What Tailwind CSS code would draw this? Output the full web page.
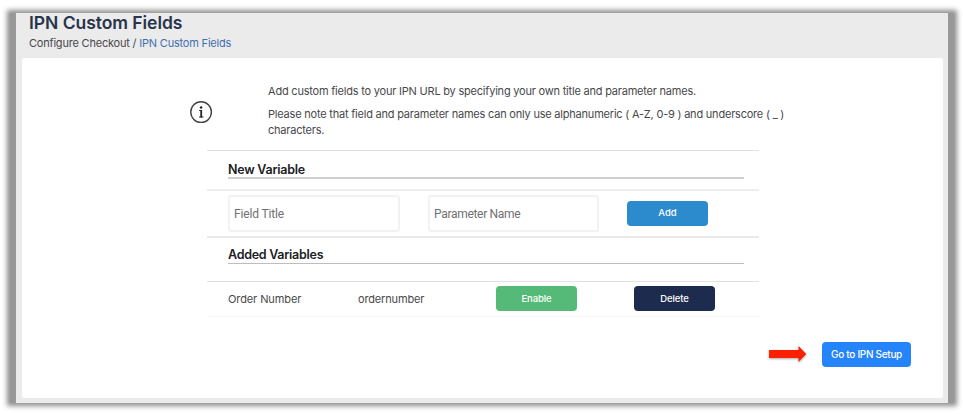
<!DOCTYPE html>
<html lang="en">
<head>
<meta charset="utf-8">
<title>IPN Custom Fields</title>
<script src="https://cdn.jsdelivr.net/npm/@tailwindcss/browser@4"></script>
</head>
<body class="h-[414px] overflow-hidden bg-white pt-[13px] pl-4 font-['Inter',sans-serif] text-[#48484b]">
<div class="relative h-[390px] w-[932px]">
  <div class="absolute -inset-x-[6px] inset-y-0 bg-[#989898] shadow-[0_0_5px_3px_#8f8f8f]"></div>
  <div class="relative flex h-full flex-col bg-[#ebebec] px-[6px] pb-[5px]">
    <header class="h-[45px] shrink-0 pl-[7px] whitespace-nowrap">
      <h1 class="h-[22px] text-[17.5px] leading-[20px] font-semibold tracking-[-0.05px] text-[#27344a]"><span>IPN Custom Fields</span></h1>
      <nav class="text-[11px] leading-[17px] tracking-[-0.2px]"><span>Configure Checkout / </span><a class="text-[#3d70ae]">IPN Custom Fields</a></nav>
    </header>
    <main class="relative mr-[-1px] h-[340px] rounded-[3px] bg-white pt-[25px]">
      <section class="flex h-[67px] pl-[168px]">
        <svg class="mt-[17px] h-6 w-6 shrink-0" viewBox="0 0 24 24" fill="none">
          <circle cx="11.1" cy="12.1" r="10.3" stroke="#444448" stroke-width="1.4"/>
          <circle cx="11.1" cy="7.6" r="1.25" fill="#222226"/>
          <path d="M9.2 10.5H12M9.1 17H13.5" stroke="#222226" stroke-width="1.1"/><path d="M11.2 10V17.5" stroke="#222226" stroke-width="1.8"/>
        </svg>
        <div class="ml-[54px] text-[11px] leading-4 tracking-[-0.21px] whitespace-nowrap">
          <p class="mb-[7px]"><span>Add custom fields to your IPN URL by specifying your own title and parameter names.</span></p>
          <p><span>Please note that field and parameter names can only use alphanumeric ( A-Z, 0-9 ) and underscore ( _ )</span><br><span>characters.</span></p>
        </div>
      </section>
      <section class="ml-[185px] w-[552px] text-[11px]">
        <div class="h-[39px] border-t border-[#e2e2e3] pr-[15px] pl-[21px]">
          <h2 class="h-[28px] border-b-2 border-[#d0d0d1] pt-[10px] text-[12.5px] leading-[17px] font-semibold tracking-[-0.25px] text-[#202024]"><span>New Variable</span></h2>
        </div>
        <form class="flex h-[47px] border-t-2 border-[#eeeeef] pt-1 pl-[21px]">
          <input class="h-[37px] w-[172px] rounded-[3px] border-2 border-[#f1f3f3] pt-px pr-1 pl-[4px] font-['Roboto',sans-serif] text-[12px] tracking-[-0.15px] placeholder:text-[#707073] placeholder:opacity-100" placeholder="Field Title">
          <input class="ml-7 h-[37px] w-[171px] rounded-[3px] border-2 border-[#f1f3f3] pt-px pr-1 pl-[4px] font-['Roboto',sans-serif] text-[12px] tracking-[-0.3px] placeholder:text-[#707073] placeholder:opacity-100" placeholder="Parameter Name">
          <button type="button" class="mt-[6px] ml-[28px] h-[25px] w-[81px] rounded-[4px] bg-[#2b8bcc] text-[9.5px] font-medium text-white">Add</button>
        </form>
        <div class="h-[45px] border-t-2 border-[#eaeaeb] pr-[15px] pl-[21px]">
          <h2 class="h-[26px] border-b border-[#bebec0] pt-[9px] text-[12.5px] leading-[16px] font-semibold tracking-[-0.27px] text-[#202024]"><span>Added Variables</span></h2>
        </div>
        <div class="flex h-9 items-center border-y border-t-[#e2e2e3] border-b-[#f5f5f6] pb-px pl-[21px]">
          <span class="w-[130px] pt-[2px] tracking-[-0.1px]"><span>Order Number</span></span>
          <span class="w-[138px] pt-[2px] tracking-[-0.15px]"><span>ordernumber</span></span>
          <button type="button" class="h-[25px] w-[81px] rounded-[4px] bg-[#55ba77] pt-px text-[9.5px] font-medium tracking-[-0.1px] text-white">Enable</button>
          <button type="button" class="ml-[57px] h-[25px] w-[81px] rounded-[4px] bg-[#1d2b4f] pt-px text-[9.5px] font-medium tracking-[-0.1px] text-white">Delete</button>
        </div>
      </section>
      <div class="mt-[25px] flex items-center justify-end pr-8">
        <svg class="mr-[14px] mb-[2px] h-[20px] w-[40px] [filter:drop-shadow(0_1px_1px_#aaa)]" viewBox="0 0 40 20"><path d="M1 6H30.5V2L38.3 10L30.5 18V14H1Z" fill="#fa2000"/></svg>
        <button type="button" class="h-[25px] w-[89px] rounded-[4px] bg-[#2684fb] pb-px text-[10px] font-medium tracking-[-0.3px] whitespace-nowrap text-white"><span>Go to IPN Setup</span></button>
      </div>
    </main>
  </div>
</div>
</body>
</html>
